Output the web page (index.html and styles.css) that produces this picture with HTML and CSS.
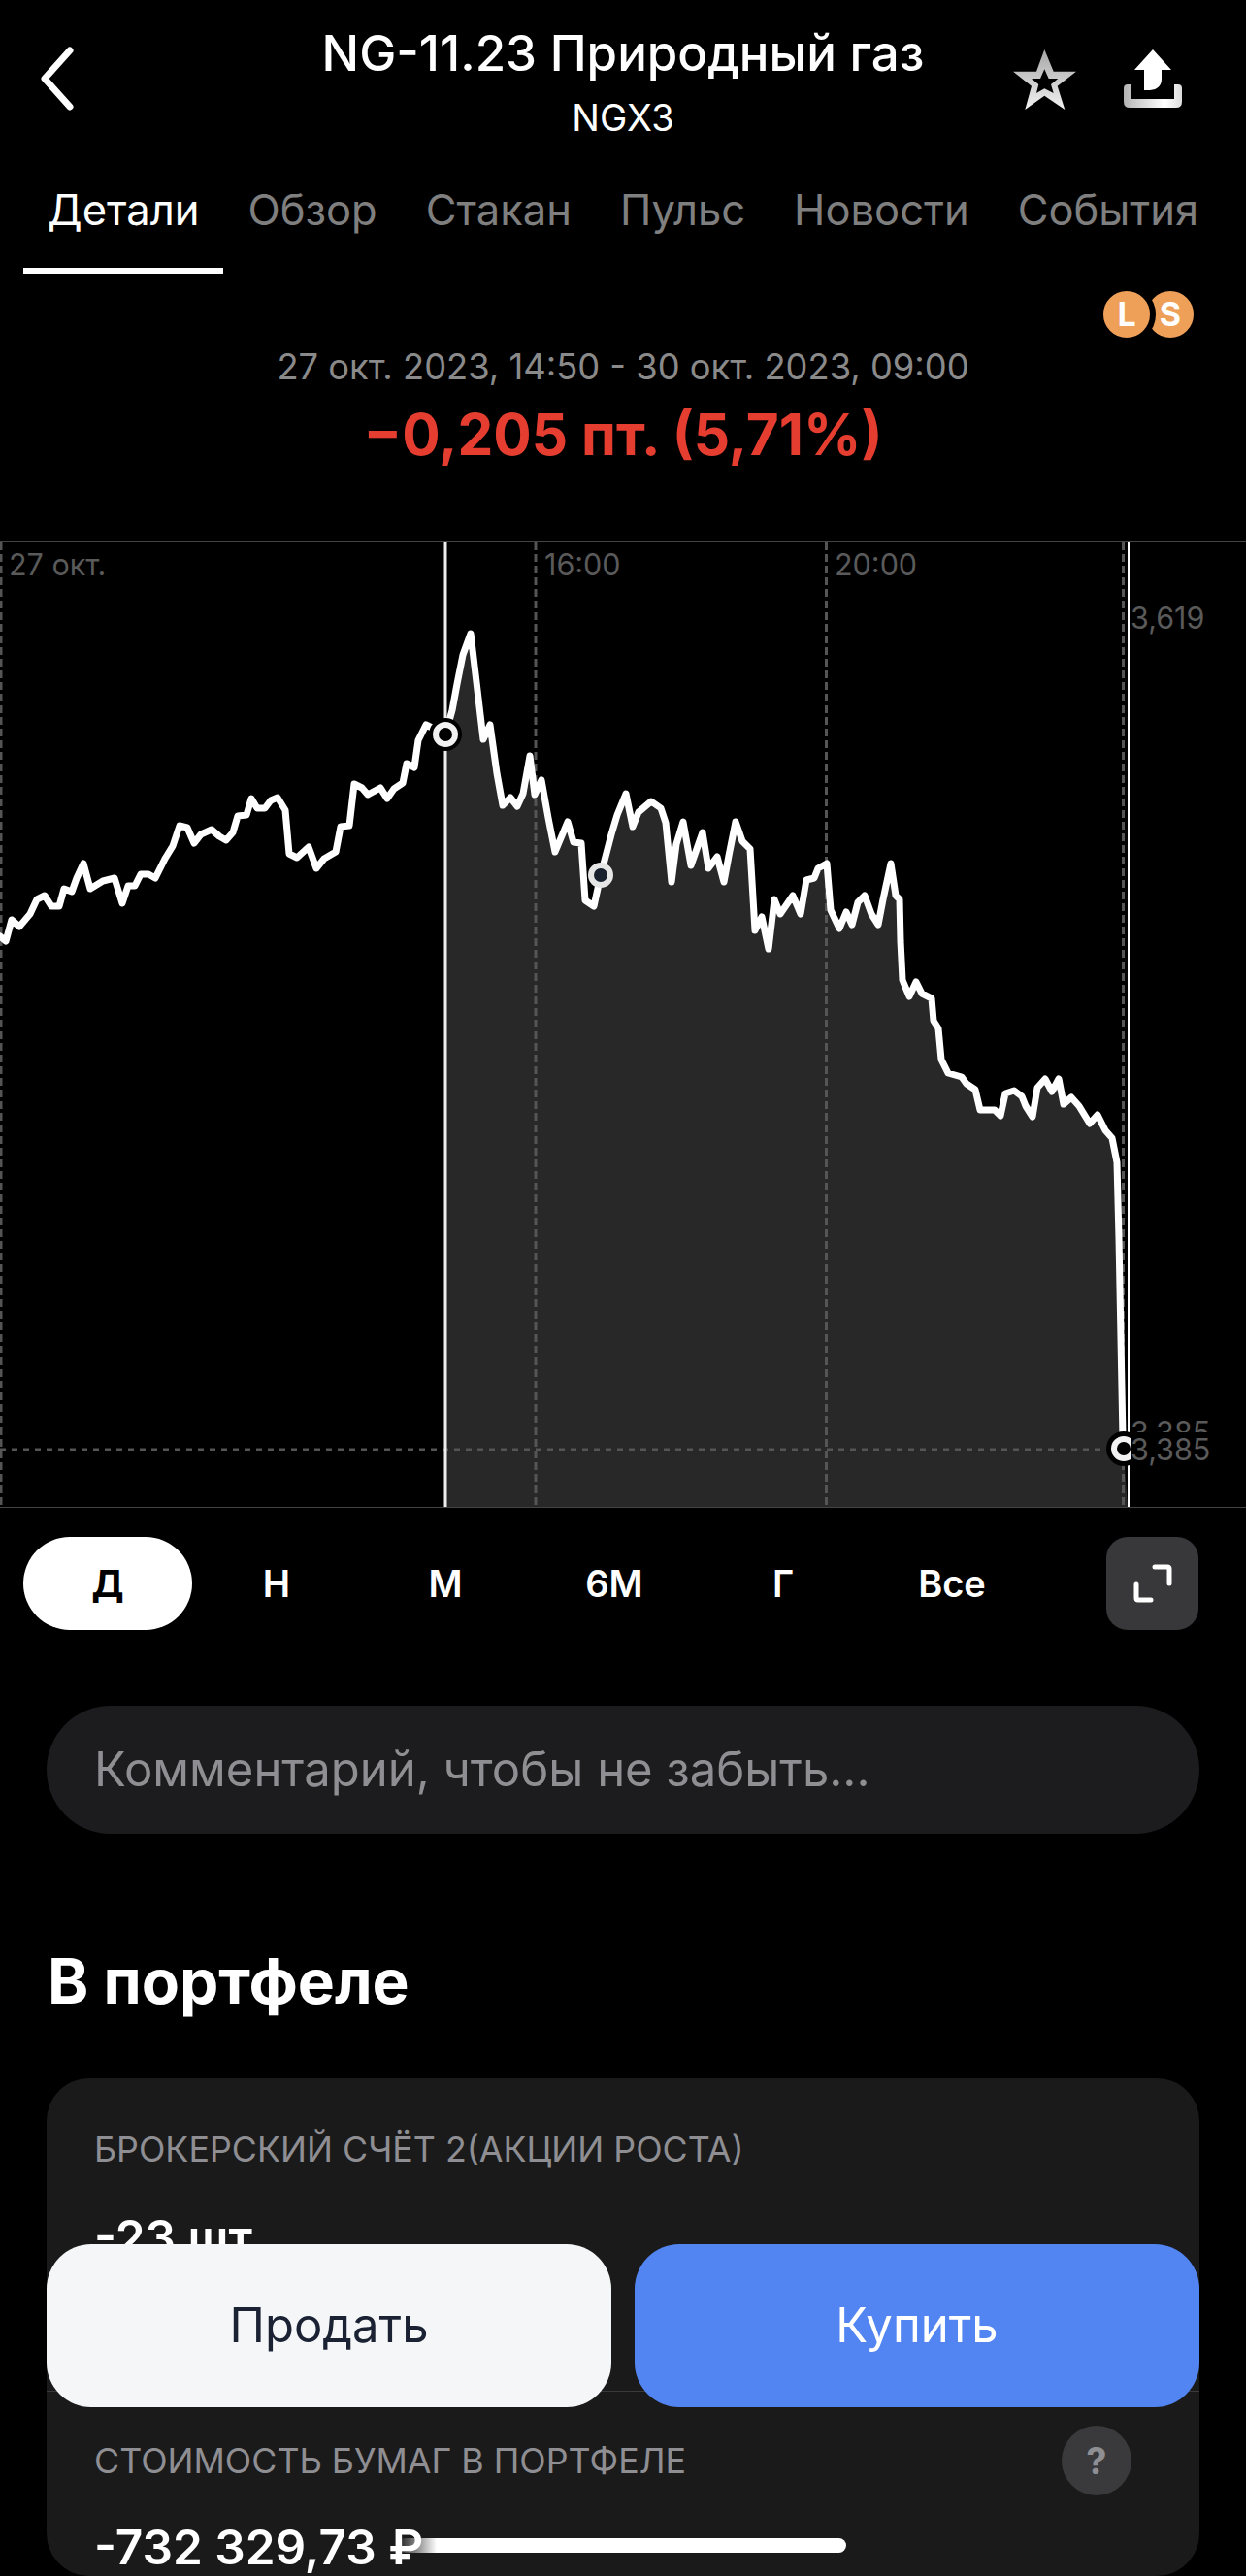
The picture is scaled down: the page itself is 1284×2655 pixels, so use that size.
FILE: index.html
```html
<!DOCTYPE html>
<html lang="ru">
<head>
  <meta charset="UTF-8" />
  <meta name="viewport" content="width=device-width, initial-scale=1.0"/>
  <title>NG-11.23 Природный газ</title>
  <link rel="stylesheet" href="styles.css">
</head>
<body>
  <div class="page">
    <header class="nav">
      <div class="nav-left">
        <svg class="icon-back" width="40" height="66" viewBox="0 0 40 66">
          <path d="M33 4 L7 33 L33 62"/>
        </svg>
      </div>
      <div class="nav-title">
        <div class="title">NG-11.23 Природный газ</div>
        <div class="ticker">NGX3</div>
      </div>
      <div class="nav-right">
        <svg width="66" height="63" viewBox="0 0 66 63">
          <defs>
            <linearGradient id="starGrad" x1="0" y1="0" x2="0" y2="1">
              <stop offset="0" stop-color="#a6a6a6"/>
              <stop offset="1" stop-color="#f2f2f2"/>
            </linearGradient>
          </defs>
          <path fill="url(#starGrad)" fill-rule="evenodd" d="M32.3 0 L41.7 22.7 H65 L45.7 37.7 L53.3 62 L32.3 47.7 L12.3 62 L19 37.7 L0 22.7 H24 Z M32.3 20.3 L28 30 H19 L26.3 36 L24 45 L32.3 40.3 L41.7 45 L39 36 L46.3 30 H36.7 Z"/>
        </svg>
        <svg width="60" height="60" viewBox="0 0 60 60">
          <defs>
            <linearGradient id="trayGrad" x1="0" y1="0" x2="1" y2="0">
              <stop offset="0" stop-color="#b4b4b4"/>
              <stop offset="0.7" stop-color="#ffffff"/>
              <stop offset="1" stop-color="#dcdcdc"/>
            </linearGradient>
          </defs>
          <path fill="#fff" d="M30 0 L49 21 H39 V30 Q39 41 27 42 H21 V21 H11 Z"/>
          <path fill="url(#trayGrad)" d="M0 40 Q0 36 4 36 H8 V51 H52 V36 H56 Q60 36 60 40 V54 Q60 60 54 60 H6 Q0 60 0 54 Z"/>
        </svg>
      </div>
    </header>

    <nav class="tabs">
      <div class="tab active">Детали</div>
      <div class="tab">Обзор</div>
      <div class="tab">Стакан</div>
      <div class="tab">Пульс</div>
      <div class="tab">Новости</div>
      <div class="tab">События</div>
    </nav>

    <section class="quote">
      <div class="ls-badges">
        <span class="ls ls-s">S</span>
        <span class="ls ls-l">L</span>
      </div>
      <div class="range">27 окт. 2023, 14:50 - 30 окт. 2023, 09:00</div>
      <div class="change">−0,205 пт. (5,71%)</div>
    </section>

    <svg class="chart" width="1284" height="1000" viewBox="0 556 1284 1000">
      <path class="chart-area" d="M459 757 L466 732 471 705 477 675 485 653 491 703 498 762 505 747 512 797 518 830 526 822 533 831 539 818 546 779 551 819 558 804 565 843 572 878 585 847 591 868 599 869 603 928 612 934 619 902 630 860 636 840 645 818 652 852 658 837 671 826 681 833 686 848 692 909 697 870 704 847 712 892 724 858 730 895 739 883 746 909 751 882 758 847 765 867 773 875 778 959 785 945 792 978 798 927 804 942 817 923 825 942 831 907 839 905 843 895 852 890 856 938 865 957 872 940 878 953 884 930 891 923 898 942 905 953 910 927 918 890 923 923 927 927 928 970 930 1010 937 1027 944 1012 950 1024 960 1029 962 1052 967 1060 970 1092 977 1106 991 1110 996 1117 1005 1123 1010 1144 1025 1144 1031 1150 1036 1127 1045 1124 1053 1130 1057 1140 1064 1151 1069 1121 1077 1112 1084 1125 1091 1112 1096 1138 1104 1131 1112 1140 1123 1158 1131 1149 1139 1165 1146 1173 1151 1198 1153 1276 1157 1483 1162 1553 L459 1553 Z"/>

      <line class="chart-border" x1="0" y1="558.5" x2="1284" y2="558.5"/>
      <line class="chart-border" x1="0" y1="1553.5" x2="1284" y2="1553.5"/>
      <line class="grid-v" x1="1" y1="559" x2="1" y2="1553"/>
      <line class="grid-v" x1="552" y1="559" x2="552" y2="1553"/>
      <line class="grid-v" x1="851.5" y1="559" x2="851.5" y2="1553"/>
      <line class="grid-v" x1="1157.5" y1="559" x2="1157.5" y2="1553"/>
      <line class="grid-h" x1="0" y1="1494" x2="1160" y2="1494"/>

      <text class="chart-label" x="9" y="593">27 окт.</text>
      <text class="chart-label" x="561" y="593">16:00</text>
      <text class="chart-label" x="860" y="593">20:00</text>
      <text class="chart-label" x="1165" y="648">3,619</text>
      <text class="chart-label" x="1165" y="1488">3,385</text>

      <line class="cursor-left" x1="459" y1="559" x2="459" y2="1553"/>
      <line class="cursor-right" x1="1163" y1="559" x2="1163" y2="1553"/>

      <polyline class="chart-line" points="0,965 6,970 12,948 20,955 31,942 38,927 46,923 53,934 61,934 66,916 74,919 79,905 86,890 93,916 106,908 118,905 126,931 132,913 139,913 145,901 153,901 160,905 170,885 178,872 185,851 193,853 200,869 207,860 218,855 226,862 233,866 240,858 245,841 254,840 259,823 265,833 273,833 279,825 286,822 294,835 298,880 306,884 318,873 326,895 334,885 346,878 351,852 360,851 365,808 373,812 379,819 392,812 399,823 406,813 415,807 419,787 427,791 431,763 439,747 459,757 466,732 471,705 477,675 485,653 491,703 498,762 505,747 512,797 518,830 526,822 533,831 539,818 546,779 551,819 558,804 565,843 572,878 585,847 591,868 599,869 603,928 612,934 619,902 630,860 636,840 645,818 652,852 658,837 671,826 681,833 686,848 692,909 697,870 704,847 712,892 724,858 730,895 739,883 746,909 751,882 758,847 765,867 773,875 778,959 785,945 792,978 798,927 804,942 817,923 825,942 831,907 839,905 843,895 852,890 856,938 865,957 872,940 878,953 884,930 891,923 898,942 905,953 910,927 918,890 923,923 927,927 928,970 930,1010 937,1027 944,1012 950,1024 960,1029 962,1052 967,1060 970,1092 977,1106 991,1110 996,1117 1005,1123 1010,1144 1025,1144 1031,1150 1036,1127 1045,1124 1053,1130 1057,1140 1064,1151 1069,1121 1077,1112 1084,1125 1091,1112 1096,1138 1104,1131 1112,1140 1123,1158 1131,1149 1139,1165 1146,1173 1151,1198 1153,1276 1157,1483"/>

      <circle class="marker-halo" cx="459" cy="757" r="17"/>
      <circle class="marker" cx="459" cy="757" r="10"/>
      <circle class="marker marker-mid" cx="619" cy="902" r="10"/>
      <circle class="marker-halo" cx="1158" cy="1493" r="18"/>
      <circle class="marker" cx="1158" cy="1493" r="10"/>
      <rect class="label-mask" x="1165" y="1476" width="100" height="36"/>
      <text class="chart-label" x="1165" y="1505">3,385</text>
    </svg>

    <div class="periods">
      <div class="period selected">Д</div>
      <div class="period">Н</div>
      <div class="period">М</div>
      <div class="period">6М</div>
      <div class="period">Г</div>
      <div class="period">Все</div>
      <div class="expand">
        <svg width="44" height="44" viewBox="0 0 44 44">
          <path d="M24 5 H37 Q39 5 39 7 V22"/>
          <path d="M5 23 V37 Q5 39 7 39 H20"/>
        </svg>
      </div>
    </div>

    <div class="comment">Комментарий, чтобы не забыть...</div>

    <h2 class="section-title">В портфеле</h2>

    <div class="card">
      <div class="card-row first">
        <div class="card-label">БРОКЕРСКИЙ СЧЁТ 2(АКЦИИ РОСТА)</div>
        <div class="card-value">-23 шт</div>
      </div>
      <div class="card-row second">
        <div class="card-head">
          <div class="card-label">СТОИМОСТЬ БУМАГ В ПОРТФЕЛЕ</div>
          <div class="help">?</div>
        </div>
        <div class="card-value value-money">-732 329,73 ₽</div>
      </div>
    </div>

    <div class="actions">
      <div class="btn btn-sell">Продать</div>
      <div class="btn btn-buy">Купить</div>
    </div>
    <div class="home-bar"></div>
  </div>
</body>
</html>
```

FILE: styles.css
```css
* {
  box-sizing: border-box;
}

html, body {
  margin: 0;
  padding: 0;
  background: #000;
}

.page {
  position: relative;
  width: 1284px;
  height: 2655px;
  overflow: hidden;
  background: #000;
  color: #fff;
  font-family: Inter, "Noto Sans", sans-serif;
}

/* header */
.nav {
  display: grid;
  grid-template-columns: 1fr auto 1fr;
  height: 158px;
  padding-top: 25px;
}

.nav-left {
  padding: 23px 0 0 39px;
}

.icon-back path {
  fill: none;
  stroke: #fff;
  stroke-width: 7;
  stroke-linecap: round;
  stroke-linejoin: round;
}

.nav-title {
  text-align: center;
}

.title {
  font-size: 51px;
  font-weight: 500;
  line-height: 60px;
  white-space: nowrap;
}

.ticker {
  font-size: 38px;
  line-height: 44px;
  margin-top: 14px;
}

.nav-right {
  display: flex;
  justify-content: flex-end;
  align-items: flex-start;
  gap: 48px;
  padding: 26px 66px 0 0;
}

/* tabs */
.tabs {
  display: flex;
  height: 124px;
  padding: 31px 0 0 24px;
}

.tab {
  height: 93px;
  padding: 0 25px;
  font-size: 43.5px;
  line-height: 54px;
  color: #7f7f7f;
  white-space: nowrap;
}

.tab.active {
  color: #fff;
  border-bottom: 6px solid #fff;
}

/* quote */
.quote {
  position: relative;
  height: 274px;
  text-align: center;
}

.ls-badges {
  position: absolute;
  top: 12px;
  right: 48px;
  width: 105px;
  height: 60px;
}

.ls {
  position: absolute;
  top: 0;
  width: 60px;
  height: 60px;
  border: 6px solid #000;
  border-radius: 50%;
  background: #ee9f58;
  color: #fff;
  font-size: 34px;
  font-weight: 700;
  line-height: 48px;
  text-align: center;
}

.ls-l {
  left: 0;
}

.ls-s {
  right: 0;
}

.range {
  padding-top: 74px;
  font-size: 36.3px;
  line-height: 44px;
  color: #8a8a8a;
}

.change {
  margin-top: 16px;
  font-size: 58.5px;
  font-weight: 700;
  line-height: 64px;
  color: #e53e31;
}

/* chart */
.chart {
  display: block;
}

.chart-area {
  fill: #282828;
}

.chart-border {
  stroke: #444;
  stroke-width: 1;
}

.grid-v {
  stroke: #555;
  stroke-width: 3;
  stroke-dasharray: 8 4;
}

.grid-h {
  stroke: #555;
  stroke-width: 3;
  stroke-dasharray: 6 6;
}

.chart-label {
  fill: #5a5a5a;
  font-size: 30.5px;
  font-family: Inter, "Noto Sans", sans-serif;
}

.cursor-left {
  stroke: #eee;
  stroke-width: 3;
}

.cursor-right {
  stroke: #fff;
  stroke-width: 2;
}

.chart-line {
  fill: none;
  stroke: #fff;
  stroke-width: 7;
  stroke-linejoin: round;
  stroke-linecap: round;
}

.marker-halo {
  fill: #000;
}

.marker {
  fill: #000;
  stroke: #f2f2f2;
  stroke-width: 6;
}

.marker-mid {
  fill: #18202e;
  stroke: #e6e6e6;
}

.label-mask {
  fill: #000;
}

/* period switch */
.periods {
  display: flex;
  align-items: center;
  height: 96px;
  margin-top: 28px;
  padding: 0 49px 0 24px;
}

.period {
  width: 174px;
  height: 96px;
  border-radius: 48px;
  font-size: 38px;
  font-weight: 600;
  line-height: 96px;
  text-align: center;
}

.period.selected {
  background: #fff;
  color: #000;
  font-weight: 700;
}

.expand {
  display: flex;
  align-items: center;
  justify-content: center;
  width: 95px;
  height: 96px;
  margin-left: auto;
  border-radius: 22px;
  background: #38383a;
}

.expand path {
  fill: none;
  stroke: #fff;
  stroke-width: 5;
  stroke-linecap: round;
}

/* comment field */
.comment {
  height: 132px;
  margin: 78px 48px 0;
  padding-left: 49px;
  border-radius: 66px;
  background: #1c1c1e;
  color: #8e8e93;
  font-size: 49px;
  line-height: 132px;
}

.section-title {
  margin: 110px 0 0 49px;
  font-size: 64px;
  font-weight: 700;
  line-height: 84px;
}

/* portfolio card */
.card {
  margin: 58px 48px 0;
  border-radius: 44px;
  background: #1a1a1a;
}

.card-row {
  padding-left: 49px;
}

.card-row.first {
  height: 323px;
  padding-top: 53px;
  border-bottom: 1px solid #3a3a3c;
}

.card-row.second {
  padding-top: 35px;
}

.card-label {
  font-size: 35.8px;
  line-height: 40px;
  color: #8e8e93;
  white-space: nowrap;
}

.card-value {
  margin-top: 41px;
  font-size: 49.5px;
  font-weight: 600;
  line-height: 60px;
  white-space: nowrap;
}

.value-money {
  margin-top: 23px;
}

.card-head {
  display: flex;
  align-items: center;
  justify-content: space-between;
  padding-right: 70px;
}

.help {
  width: 72px;
  height: 72px;
  border-radius: 50%;
  background: #3a3a3c;
  color: #8e8e93;
  font-size: 38px;
  font-weight: 700;
  line-height: 72px;
  text-align: center;
}

/* fixed bottom buttons */
.actions {
  position: absolute;
  left: 48px;
  right: 48px;
  top: 2313px;
  display: flex;
  gap: 24px;
}

.btn {
  flex: 1;
  height: 168px;
  border-radius: 46px;
  font-size: 49px;
  line-height: 168px;
  text-align: center;
}

.btn-sell {
  background: #f5f6f7;
  color: #1a2233;
}

.btn-buy {
  background: #5285f2;
  color: #fff;
}

.home-bar {
  position: absolute;
  left: 410px;
  top: 2616px;
  width: 462px;
  height: 15px;
  border-radius: 8px;
  background: linear-gradient(90deg, rgba(255,255,255,0) 0, #fff 40px);
}
```
